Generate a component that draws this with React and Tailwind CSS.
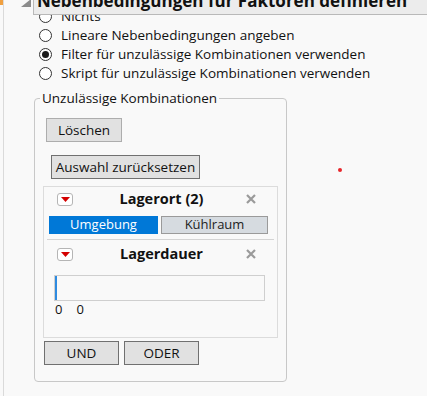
import React from 'react';

const font = { fontFamily: '"Open Sans", "Noto Sans", sans-serif' };

function Radio({ checked, label }) {
  return (
    <div className="flex items-center h-[19px]">
      <span className="w-[13px] h-[13px] rounded-full border border-[#333] bg-white flex items-center justify-center ml-[35px]">
        {checked && <span className="w-[7px] h-[7px] rounded-full bg-[#1a1a1a]" />}
      </span>
      <span className="ml-[9px] text-[13.5px] text-[#111] leading-none">{label}</span>
    </div>
  );
}

function Btn({ children, className }) {
  return (
    <div className={`h-[24px] flex items-center justify-center bg-[#e1e1e1] border text-[13.5px] text-[#111] ${className}`}>
      {children}
    </div>
  );
}

function DropBtn() {
  return (
    <span className="w-[16px] h-[13px] rounded-[3px] border border-[#b5b5b5] bg-white flex items-center justify-center">
      <svg width="9" height="5" viewBox="0 0 9 5"><path d="M0 0 H9 L4.5 5 Z" fill="#d40000" /></svg>
    </span>
  );
}

function Close() {
  return (
    <svg width="10" height="10" viewBox="0 0 10 10" className="mr-[21px]">
      <path d="M1 1 L9 9 M9 1 L1 9" stroke="#9a9a9a" strokeWidth="2.2" />
    </svg>
  );
}

export default function App() {
  return (
    <div className="w-[427px] h-[396px] bg-[#f9f9f9] flex overflow-hidden" style={font}>
      <div className="w-[4px] border-r border-[#dadada] flex flex-col">
        <div className="h-[5px] bg-[#f0a040]" />
      </div>
      <div className="flex-1 flex flex-col">
        {/* header */}
        <div className="flex h-[15px] relative z-10">
          <svg width="12" height="9" viewBox="0 0 12 9" className="ml-[16px] mt-[-1px]">
            <path d="M11 0 V8 H1 Z" fill="#8c8c8c" />
          </svg>
          <div className="flex-1 ml-[1px] bg-[#ececec] border-l border-b border-[#b9b9b9] overflow-hidden">
            <div className="mt-[-9px] ml-[3px] text-[17px] font-bold text-[#111] whitespace-nowrap leading-[20px]">
              Nebenbedingungen für Faktoren definieren
            </div>
          </div>
        </div>
        {/* radios */}
        <div className="mt-[-8px] flex flex-col">
          <Radio label="Nichts" />
          <Radio label="Lineare Nebenbedingungen angeben" />
          <Radio checked label="Filter für unzulässige Kombinationen verwenden" />
          <Radio label="Skript für unzulässige Kombinationen verwenden" />
        </div>
        <div className="flex">
          {/* group box */}
          <div className="relative ml-[30px] mt-[15px] w-[253px] h-[284px] border border-[#c8c8c8] rounded-[4px] pt-[19px] pl-[8px]">
            <div className="absolute left-[5px] top-[-10px] bg-[#f9f9f9] px-[2px] text-[13.5px] text-[#111] leading-[18px]">
              Unzulässige Kombinationen
            </div>
            <Btn className="w-[76px] border-[#adadad] ml-[3px]">Löschen</Btn>
            <Btn className="w-[149px] border-[#707070] ml-[8px] mt-[13px]">Auswahl zurücksetzen</Btn>
            <div className="mt-[7px] w-[235px] h-[152px] border border-[#dcdcdc] flex flex-col">
              <div className="flex items-center h-[24px]">
                <div className="ml-[13px]"><DropBtn /></div>
                <div className="flex-1 text-center font-bold text-[14.5px] text-[#111] pl-[4px]">Lagerort (2)</div>
                <Close />
              </div>
              <div className="flex ml-[5px] mt-[5px] gap-[3px] h-[18px]">
                <div className="w-[109px] bg-[#0078d7] text-white text-[13px] flex items-center justify-center">Umgebung</div>
                <div className="w-[107px] bg-[#d6dbe0] border border-[#9a9a9a] text-[#222] text-[13px] flex items-center justify-center">Kühlraum</div>
              </div>
              <div className="mx-[3px] mt-[5px] border-t border-[#d4d4d4]" />
              <div className="flex items-center h-[24px] mt-[2px]">
                <div className="ml-[13px]"><DropBtn /></div>
                <div className="flex-1 text-center font-bold text-[14.5px] text-[#111] pl-[4px]">Lagerdauer</div>
                <Close />
              </div>
              <div className="ml-[10px] mt-[9px] w-[211px] h-[26px] border border-[#cfcfcf] flex">
                <div className="w-[2px] bg-[#2e8be0]" />
              </div>
              <div className="flex gap-[14px] ml-[11px] text-[13px] text-[#111] leading-[16px] mt-[0px]">
                <span>0</span>
                <span>0</span>
              </div>
            </div>
            <div className="flex gap-[5px] mt-[3px] ml-[1px]">
              <Btn className="w-[75px] border-[#707070]">UND</Btn>
              <Btn className="w-[75px] border-[#707070]">ODER</Btn>
            </div>
          </div>
          <div className="ml-[51px] mt-[85px] w-[4px] h-[4px] rounded-full bg-[#e8262b]" />
        </div>
      </div>
    </div>
  );
}
